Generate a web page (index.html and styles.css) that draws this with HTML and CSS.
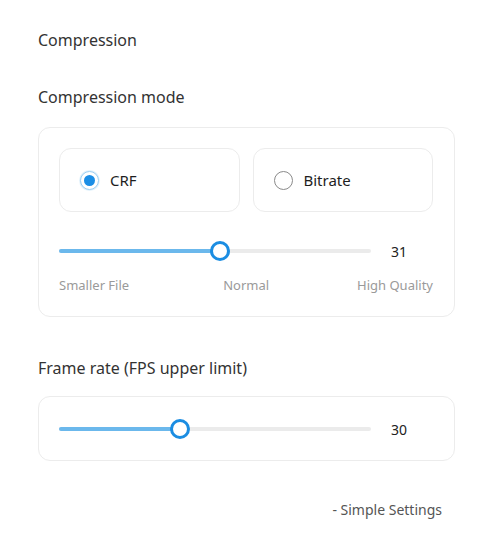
FILE: index.html
```html
<!DOCTYPE html>
<html>
<head>
<meta charset="utf-8">
<link rel="stylesheet" href="styles.css">
</head>
<body>
<div class="dialog">
  <div class="title">Compression</div>
  <div class="heading">Compression mode</div>
  <div class="panel">
    <div class="modes">
      <div class="mode">
        <span class="radio checked"><span class="dot"></span></span>
        <span class="mode-label">CRF</span>
      </div>
      <div class="mode">
        <span class="radio"></span>
        <span class="mode-label">Bitrate</span>
      </div>
    </div>
    <div class="slider-row crf-row">
      <div class="slider">
        <div class="track"></div>
        <div class="fill" style="width:51.6%"></div>
        <div class="thumb" style="left:51.6%"></div>
      </div>
      <div class="value">31</div>
    </div>
    <div class="scale">
      <span>Smaller File</span>
      <span class="mid">Normal</span>
      <span>High Quality</span>
    </div>
  </div>
  <div class="heading fps">Frame rate (FPS upper limit)</div>
  <div class="panel panel-fps">
    <div class="slider-row">
      <div class="slider">
        <div class="track"></div>
        <div class="fill" style="width:38.8%"></div>
        <div class="thumb" style="left:38.8%"></div>
      </div>
      <div class="value">30</div>
    </div>
  </div>
  <div class="footer"><span class="simple">- Simple Settings</span></div>
</div>
</body>
</html>
```
FILE: styles.css
```css
html, body {
  margin: 0;
  padding: 0;
  background: #ffffff;
}
body {
  width: 495px;
  height: 558px;
  overflow: hidden;
  font-family: "Noto Sans", "Open Sans", sans-serif;
  color: #333;
}
.dialog {
  box-sizing: border-box;
  width: 495px;
  height: 558px;
  padding: 28px 40px 0 38px;
  background: #fff;
}
.title {
  font-size: 16px;
  line-height: 24px;
  height: 24px;
}
.heading {
  font-size: 16px;
  line-height: 24px;
  margin-top: 33px;
}
.heading.fps {
  margin-top: 39px;
}
.panel {
  box-sizing: border-box;
  margin-top: 18px;
  width: 417px;
  border: 1px solid #ececec;
  border-radius: 12px;
  padding: 20px 21px 22px 20px;
}
.modes {
  display: flex;
  gap: 13px;
}
.mode {
  box-sizing: border-box;
  flex: 1;
  height: 64px;
  border: 1px solid #ececec;
  border-radius: 12px;
  display: flex;
  align-items: center;
  padding-left: 20px;
}
.radio {
  box-sizing: border-box;
  width: 19px;
  height: 19px;
  border-radius: 50%;
  border: 1px solid #8a8a8a;
  display: flex;
  align-items: center;
  justify-content: center;
  background: #fff;
}
.radio.checked {
  border: 1px solid #9ccff2;
  box-shadow: 0 0 0 1px #e3f2fc;
}
.dot {
  width: 11px;
  height: 11px;
  border-radius: 50%;
  background: #1a8ee6;
}
.mode-label {
  margin-left: 11px;
  font-size: 15px;
  font-weight: 400;
  color: #1e1e1e;
}
.slider-row {
  display: flex;
  align-items: center;
  height: 20px;
}
.crf-row {
  margin-top: 29px;
}
.slider {
  position: relative;
  width: 312px;
  height: 20px;
}
.track, .fill {
  position: absolute;
  left: 0;
  top: 8px;
  height: 4px;
  border-radius: 2px;
}
.track {
  width: 100%;
  background: #ebebeb;
}
.fill {
  background: #6bb8ec;
}
.thumb {
  position: absolute;
  top: 0;
  box-sizing: border-box;
  width: 20px;
  height: 20px;
  margin-left: -10px;
  border-radius: 50%;
  border: 3px solid #1b8de2;
  background: #fff;
}
.value {
  margin-left: 20px;
  font-size: 14px;
  color: #222;
}
.scale {
  display: flex;
  justify-content: space-between;
  margin-top: 15px;
  font-size: 13px;
  line-height: 18px;
  color: #9a9a9a;
}
.scale .mid {
  margin-left: 6px;
}
.panel-fps {
  margin-top: 16px;
  padding-top: 22px;
  padding-bottom: 21px;
}
.footer {
  display: flex;
  justify-content: flex-end;
  margin-top: 39px;
  width: 404px;
}
.simple {
  font-size: 14px;
  color: #555;
}
```
